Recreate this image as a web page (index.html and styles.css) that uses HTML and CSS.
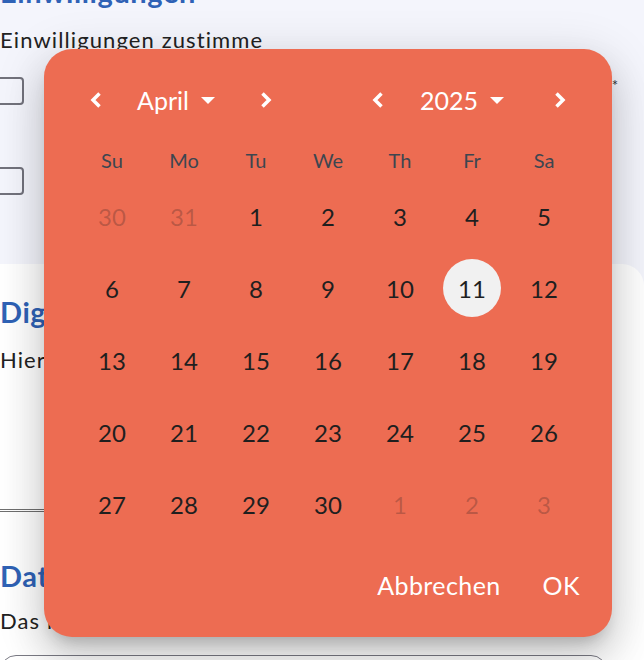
FILE: index.html
```html
<!DOCTYPE html>
<html lang="de">
<head>
<meta charset="utf-8">
<title>Datum wählen</title>
<link rel="stylesheet" href="styles.css">
</head>
<body>
<div class="page">
  <section class="consent">
    <h2 class="title">Einwilligungen</h2>
    <p class="text">Einwilligungen zustimme</p>
    <div class="check-row">
      <span class="box"></span>
      <span class="label">Ich stimme der Verarbeitung meiner Daten zu</span>
      <span class="req">*</span>
    </div>
    <div class="check-row">
      <span class="box"></span>
      <span class="label">Ich möchte Informationen erhalten</span>
    </div>
  </section>
  <section class="card">
    <h2 class="title">Digitale Unterschrift</h2>
    <p class="text">Hier unterschreiben</p>
    <div class="pad"></div>
    <h2 class="title second">Datum</h2>
    <p class="text tight">Das heutige Datum</p>
    <div class="input"></div>
  </section>

  <div class="picker" role="dialog">
    <div class="picker-head">
      <div class="nav-group month">
        <span class="nav-btn"><svg width="14" height="18" viewBox="0 0 14 18"><polyline points="10.5,2.5 4,9 10.5,15.5" fill="none" stroke="#fff" stroke-width="3.5"/></svg></span>
        <span class="nav-label">April<svg width="14" height="7" viewBox="0 0 14 7"><polygon points="0,0 14,0 7,7" fill="#fff"/></svg></span>
        <span class="nav-btn"><svg width="14" height="18" viewBox="0 0 14 18"><polyline points="3.5,2.5 10,9 3.5,15.5" fill="none" stroke="#fff" stroke-width="3.5"/></svg></span>
      </div>
      <div class="nav-group year">
        <span class="nav-btn"><svg width="14" height="18" viewBox="0 0 14 18"><polyline points="10.5,2.5 4,9 10.5,15.5" fill="none" stroke="#fff" stroke-width="3.5"/></svg></span>
        <span class="nav-label">2025<svg width="14" height="7" viewBox="0 0 14 7"><polygon points="0,0 14,0 7,7" fill="#fff"/></svg></span>
        <span class="nav-btn"><svg width="14" height="18" viewBox="0 0 14 18"><polyline points="3.5,2.5 10,9 3.5,15.5" fill="none" stroke="#fff" stroke-width="3.5"/></svg></span>
      </div>
    </div>
    <div class="weekdays">
      <span>Su</span><span>Mo</span><span>Tu</span><span>We</span><span>Th</span><span>Fr</span><span>Sa</span>
    </div>
    <div class="days">
      <span class="day muted">30</span><span class="day muted">31</span><span class="day">1</span><span class="day">2</span><span class="day">3</span><span class="day">4</span><span class="day">5</span>
      <span class="day">6</span><span class="day">7</span><span class="day">8</span><span class="day">9</span><span class="day">10</span><span class="day selected"><span>11</span></span><span class="day">12</span>
      <span class="day">13</span><span class="day">14</span><span class="day">15</span><span class="day">16</span><span class="day">17</span><span class="day">18</span><span class="day">19</span>
      <span class="day">20</span><span class="day">21</span><span class="day">22</span><span class="day">23</span><span class="day">24</span><span class="day">25</span><span class="day">26</span>
      <span class="day">27</span><span class="day">28</span><span class="day">29</span><span class="day">30</span><span class="day muted">1</span><span class="day muted">2</span><span class="day muted">3</span>
    </div>
    <div class="picker-foot">
      <span class="btn">Abbrechen</span>
      <span class="btn">OK</span>
    </div>
  </div>
</div>
</body>
</html>
```

FILE: styles.css
```css
html, body {
  margin: 0;
  padding: 0;
}
body {
  width: 644px;
  height: 660px;
  overflow: hidden;
  background: #f4f5fc;
  font-family: Lato, "Liberation Sans", sans-serif;
  color: #222;
}
.page {
  position: relative;
  display: flow-root;
  height: 660px;
}

/* background content */
.consent {
  padding: 0 26px 35px 0;
}
.title {
  margin: -24px 0 0;
  font-size: 29px;
  line-height: 32px;
  font-weight: 700;
  letter-spacing: 0.6px;
  color: #2f62b6;
  white-space: nowrap;
}
.text {
  margin: 18px 0 0;
  font-size: 22px;
  line-height: 28px;
  letter-spacing: 1.1px;
  color: #222;
  white-space: nowrap;
}
.text.tight {
  margin-top: 15px;
}
.check-row {
  display: flex;
  align-items: flex-start;
  min-height: 62px;
  margin-top: 23px;
}
.check-row + .check-row {
  margin-top: 28px;
}
.box {
  flex: none;
  width: 28px;
  height: 28px;
  box-sizing: border-box;
  margin-left: -4px;
  border: 2.5px solid #72727c;
  border-radius: 4px;
}
.label {
  flex: 1;
  margin-left: 26px;
  font-size: 21px;
  line-height: 28px;
  white-space: nowrap;
  overflow: hidden;
}
.req {
  flex: none;
  font-size: 15px;
  line-height: 15px;
  margin-top: 1px;
  color: #333;
}
.card {
  background: #fff;
  border-top-right-radius: 22px;
  padding: 32px 37px 0 0;
  height: 400px;
}
.card .title {
  margin-top: 0;
}
.card .title.second {
  margin-top: 48px;
}
.pad {
  height: 135px;
  border-bottom: 3px double #6f6f6f;
}
.input {
  margin-top: 20px;
  height: 56px;
  border: 1px solid #7a7a84;
  border-radius: 16px;
}

/* date picker dialog */
.picker {
  position: absolute;
  left: 44px;
  top: 49px;
  width: 568px;
  height: 588px;
  box-sizing: border-box;
  padding: 28px 32px 30px;
  background: #ed6c52;
  border-radius: 28px;
  color: #fff;
  box-shadow: 0 11px 15px -7px rgba(0,0,0,.2), 0 24px 38px 3px rgba(0,0,0,.12), 0 9px 46px 8px rgba(0,0,0,.1);
}
.picker-head {
  display: flex;
  justify-content: space-between;
  height: 46px;
}
.nav-group {
  display: grid;
  grid-template-columns: 40px 1fr 40px;
  align-items: center;
}
.nav-group.month {
  width: 210px;
}
.nav-group.year {
  width: 222px;
}
.nav-btn {
  height: 46px;
  display: flex;
  align-items: center;
  justify-content: center;
}
.nav-label {
  display: flex;
  align-items: center;
  gap: 12px;
  padding-left: 21px;
  font-size: 25px;
  line-height: 30px;
}
.year .nav-label {
  padding-left: 22px;
}
.weekdays {
  margin-top: 17px;
  display: grid;
  grid-template-columns: repeat(7, 72px);
  height: 40px;
  align-items: center;
  justify-items: center;
  font-size: 20px;
  color: #3d4650;
}
.days {
  display: grid;
  grid-template-columns: repeat(7, 72px);
  grid-auto-rows: 72px;
}
.day {
  display: flex;
  align-items: center;
  justify-content: center;
  font-size: 24px;
  color: #1f1f1f;
}
.day.muted {
  color: rgba(40, 30, 30, .26);
}
.day.selected span {
  width: 58px;
  height: 58px;
  border-radius: 50%;
  background: #f1f1f1;
  display: flex;
  align-items: center;
  justify-content: center;
}
.picker-foot {
  margin-top: 23px;
  height: 44px;
  display: flex;
  justify-content: flex-end;
  align-items: center;
  gap: 42px;
  padding-right: 0;
  font-size: 25px;
  letter-spacing: 0.4px;
}
.btn {
  color: #fff;
}
```
